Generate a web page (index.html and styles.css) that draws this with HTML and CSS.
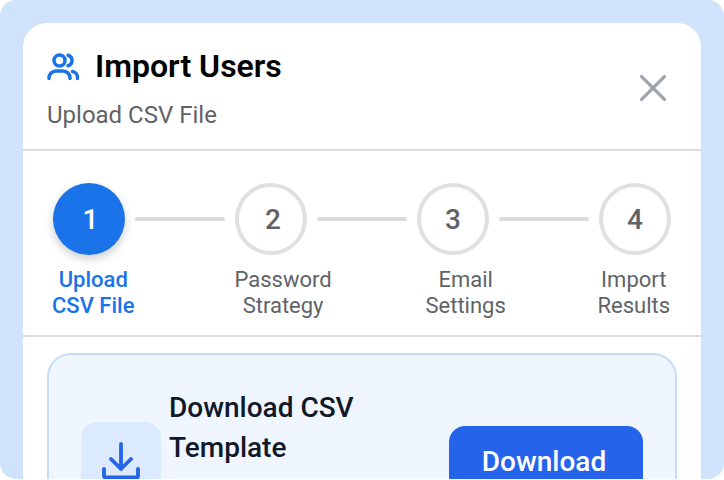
FILE: index.html
```html
<!DOCTYPE html>
<html lang="en">
<head>
    <meta charset="UTF-8">
    <meta name="viewport" content="width=device-width, initial-scale=1.0">
    <title>Import Users</title>
    <link rel="stylesheet" href="styles.css">
</head>
<body>

    <div class="frame">
        <div class="card">
            <div class="header">
                <div>
                    <div class="title-row">
                        <svg class="users-icon" viewBox="0 0 32 32" fill="none" stroke="#1a73e8" stroke-width="3.5" stroke-linecap="round">
                            <circle cx="12.500" cy="10.500" r="5.500"/>
                            <path d="M2 28.500V28a7 7 0 0 1 7-7h7a7 7 0 0 1 7 7v.5"/>
                            <path d="M21 5.200a5.500 5.500 0 0 1 0 10.600"/>
                            <path d="M25.500 21.500a6 6 0 0 1 5 6v1"/>
                        </svg>
                        <h1>Import Users</h1>
                    </div>
                    <p class="subtitle">Upload CSV File</p>
                </div>
                <button class="close-btn">
                    <svg viewBox="0 0 32 32" fill="none" stroke="#a0a3ad" stroke-width="3.8" stroke-linecap="round">
                        <path d="M3 3l26 26M29 3L3 29"/>
                    </svg>
                </button>
            </div>

            <div class="stepper">
                <div class="circles">
                    <div class="circle active">1</div>
                    <div class="line"></div>
                    <div class="circle nudged">2</div>
                    <div class="line"></div>
                    <div class="circle">3</div>
                    <div class="line"></div>
                    <div class="circle">4</div>
                </div>
                <div class="labels">
                    <div class="label active">Upload<br>CSV File</div>
                    <div class="label">Password<br>Strategy</div>
                    <div class="label">Email<br>Settings</div>
                    <div class="label">Import<br>Results</div>
                </div>
            </div>

            <div class="content">
                <div class="template-panel">
                    <div class="icon-box">
                        <svg viewBox="0 0 40 40" fill="none" stroke="#2563eb" stroke-width="3.800" stroke-linecap="round" stroke-linejoin="round">
                            <path d="M20 2v25M10 17l10 10 10-10"/>
                            <path d="M3 27v7a1.500 1.500 0 0 0 1.500 1.500h31A1.500 1.500 0 0 0 37 34v-7"/>
                        </svg>
                    </div>
                    <h2>Download CSV Template</h2>
                    <button class="download-btn">Download</button>
                </div>
            </div>
        </div>
    </div>

</body>
</html>
```

FILE: styles.css
```css
html, body {
    margin: 0;
    height: 100%;
    overflow: hidden;
    background: white;
}

body {
    font-family: Roboto, Arial, sans-serif;
}

.frame {
    height: 479px;
    box-sizing: border-box;
    padding: 23px 23px 0;
    background: #cfe4fc;
    border-radius: 16px;
    overflow: hidden;
}

.card {
    height: 600px;
    background: white;
    border-radius: 24px;
}

.header {
    display: flex;
    justify-content: space-between;
    align-items: center;
    padding: 23px 34px 18px 24px;
    border-bottom: 2px solid #dcdcdc;
}

.title-row {
    display: flex;
    align-items: center;
    gap: 16px;
}

.users-icon {
    width: 32px;
    height: 32px;
}

h1 {
    margin: 0;
    font-size: 32px;
    line-height: 40px;
    font-weight: 600;
    color: #000;
}

.subtitle {
    margin: 13px 0 0;
    font-size: 24px;
    line-height: 32px;
    color: #5f6368;
}

.close-btn {
    width: 28px;
    height: 28px;
    margin-bottom: 2px;
    padding: 0;
    border: none;
    background: none;
}

.close-btn svg {
    display: block;
    width: 28px;
    height: 28px;
}

.stepper {
    padding: 32px 0 16px;
    border-bottom: 2px solid #dcdcdc;
}

.circles {
    display: flex;
    align-items: center;
    gap: 10px;
    padding-left: 30px;
}

.circle {
    box-sizing: border-box;
    width: 72px;
    height: 72px;
    display: flex;
    align-items: center;
    justify-content: center;
    border: 4px solid #e0e0e0;
    border-radius: 50%;
    font-size: 28px;
    font-weight: 500;
    color: #5f6368;
    background: white;
}

.circle.active {
    padding-left: 3px;
    border: none;
    background: #1a73e8;
    color: white;
    box-shadow: 0 4px 10px rgba(0, 0, 0, 0.2);
}

.circle.nudged {
    padding-left: 4px;
}

.line {
    width: 90px;
    height: 4px;
    border-radius: 2px;
    background: #dcdcdc;
}

.labels {
    display: grid;
    grid-template-columns: 182.500px 191px 172px auto;
    justify-items: start;
    margin-top: 12px;
    padding-left: 29px;
}

.label {
    font-size: 22px;
    line-height: 26px;
    text-align: center;
    color: #5f6368;
}

.label.active {
    font-weight: 500;
    color: #1a73e8;
}

.content {
    padding: 16px 24px;
}

.template-panel {
    display: flex;
    align-items: center;
    min-height: 150px;
    padding: 32px;
    background: #eff6ff;
    border: 2px solid #c5dcf8;
    border-radius: 24px;
}

.icon-box {
    flex: none;
    box-sizing: border-box;
    width: 80px;
    height: 80px;
    padding: 20px;
    background: #dbeafe;
    border-radius: 16px;
}

.icon-box svg {
    display: block;
    width: 40px;
    height: 40px;
}

h2 {
    flex: 1;
    align-self: flex-start;
    margin: 1px 8px 0;
    font-size: 28px;
    line-height: 40px;
    font-weight: 500;
    color: #111827;
}

.download-btn {
    flex: none;
    width: 194px;
    height: 72px;
    padding: 0 4px 2px 0;
    border: none;
    border-radius: 16px;
    background: #2563eb;
    color: white;
    font-family: inherit;
    font-size: 28px;
    font-weight: 500;
}
```
